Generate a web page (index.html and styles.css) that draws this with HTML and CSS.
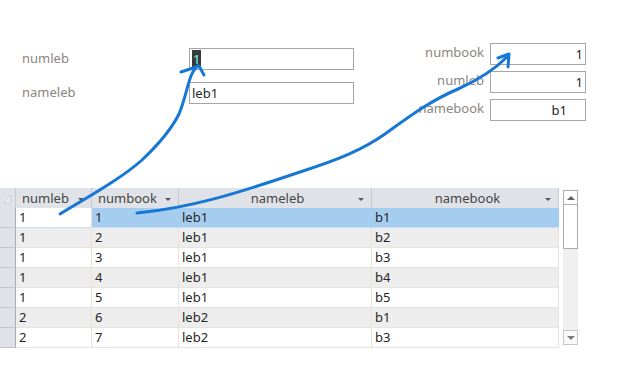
FILE: index.html
```html
<!DOCTYPE html>
<html lang="en">
<head>
    <meta charset="UTF-8">
    <meta name="viewport" content="width=device-width, initial-scale=1.0">
    <title>leb / book</title>
    <link rel="stylesheet" href="styles.css">
</head>
<body>

<div class="screen">
    <div class="forms">
        <div class="form-left">
            <label>numleb</label>
            <div class="field"><span class="sel">1</span></div>
            <label>nameleb</label>
            <div class="field">leb1</div>
        </div>
        <div class="form-right">
            <label>numbook</label>
            <div class="field num">1</div>
            <label>numleb</label>
            <div class="field num">1</div>
            <label>namebook</label>
            <div class="field num wide-pad">b1</div>
        </div>
    </div>

    <div class="datasheet">
        <div class="grid">
            <div class="row head">
                <div class="corner">
                    <svg width="14" height="19" viewBox="0 0 14 19"><path d="M3 15 L11 7 L11 15 Z" fill="#e9ebee" stroke="#cdd0d4" stroke-width="1"/></svg>
                </div>
                <div class="th"><span class="th-label">numleb</span><span class="dd"></span></div>
                <div class="th"><span class="th-label">numbook</span><span class="dd"></span></div>
                <div class="th center"><span class="th-label">nameleb</span><span class="dd"></span></div>
                <div class="th center"><span class="th-label">namebook</span><span class="dd"></span></div>
            </div>
            <div class="row selected">
                <div class="rs"></div>
                <div class="td current">1</div>
                <div class="td">1</div>
                <div class="td">leb1</div>
                <div class="td">b1</div>
            </div>
            <div class="row alt">
                <div class="rs"></div>
                <div class="td">1</div><div class="td">2</div><div class="td">leb1</div><div class="td">b2</div>
            </div>
            <div class="row">
                <div class="rs"></div>
                <div class="td">1</div><div class="td">3</div><div class="td">leb1</div><div class="td">b3</div>
            </div>
            <div class="row alt">
                <div class="rs"></div>
                <div class="td">1</div><div class="td">4</div><div class="td">leb1</div><div class="td">b4</div>
            </div>
            <div class="row">
                <div class="rs"></div>
                <div class="td">1</div><div class="td">5</div><div class="td">leb1</div><div class="td">b5</div>
            </div>
            <div class="row alt">
                <div class="rs"></div>
                <div class="td">2</div><div class="td">6</div><div class="td">leb2</div><div class="td">b1</div>
            </div>
            <div class="row">
                <div class="rs"></div>
                <div class="td">2</div><div class="td">7</div><div class="td">leb2</div><div class="td">b3</div>
            </div>
        </div>

        <div class="vscroll">
            <div class="sb-btn"><span class="tri-up"></span></div>
            <div class="sb-thumb"></div>
            <div class="sb-track"></div>
            <div class="sb-btn bottom"><span class="tri-down"></span></div>
        </div>
    </div>

    <!-- hand drawn arrows on top of the screenshot -->
    <svg class="ink" width="633" height="372" viewBox="0 0 633 372">
        <path d="M60 214 C88 197 122 178 142 160 C160 143 172 128 179 114 C185 100 187 86 191 76 C193 71 195 68 198 66"/>
        <path d="M181 72 L199 66 L204 75"/>
        <path d="M137 213 C190 208 235 194 300 172 C340 159 362 150 385 134 C410 116 430 101 458 89 C478 80 494 70 507 57"/>
        <path d="M498 58 L509 54 L508 67"/>
    </svg>
</div>

</body>
</html>
```

FILE: styles.css
```css
body {
    margin: 0;
    padding: 0;
    background-color: #fff;
    font-family: "Noto Sans", "Open Sans", sans-serif;
    font-size: 13px;
    color: #262626;
}
.screen {
    position: relative;
    width: 633px;
    height: 372px;
    overflow: hidden;
}
.forms {
    display: flex;
    align-items: flex-start;
    height: 188px;
}
label {
    color: #8b8580;
    white-space: nowrap;
    align-self: center;
}
.field {
    box-sizing: border-box;
    height: 22px;
    border: 1px solid #a6a6a6;
    padding: 0 2px;
    line-height: 20px;
    background-color: #fff;
    white-space: nowrap;
}
.form-left {
    display: grid;
    grid-template-columns: 167px 165px;
    row-gap: 12px;
    margin: 48px 0 0 22px;
}
.form-left label {
    margin-top: -3px;
}
.sel {
    display: inline-block;
    background-color: #3a3a3a;
    color: #6ff;
    padding: 0 1px;
    line-height: 18px;
    margin-top: 1px;
}
.form-right {
    display: grid;
    grid-template-columns: 66px 96px;
    column-gap: 6px;
    row-gap: 6px;
    margin: 43px 0 0 64px;
}
.form-right label {
    text-align: right;
    margin-top: -4px;
}
.field.num {
    text-align: right;
    padding-right: 2px;
}
.field.wide-pad {
    padding-right: 18px;
}

/* datasheet */
.datasheet {
    display: flex;
    align-items: flex-start;
}
.grid {
    width: 559px;
}
.row {
    display: grid;
    grid-template-columns: 16px 76px 87px 193px 187px;
    height: 20px;
}
.row > div {
    box-sizing: border-box;
    height: 20px;
    line-height: 19px;
    white-space: nowrap;
    overflow: hidden;
}
.head > div {
    background-color: #dfe2e6;
    color: #454545;
    border-right: 1px solid #c6c9cd;
}
.corner {
    border-right: 1px solid #c6c9cd;
}
.corner svg {
    display: block;
}
.th {
    display: flex;
    align-items: center;
    padding: 0 7px 0 6px;
}
.th-label {
    flex: 1;
}
.th.center .th-label {
    text-align: center;
    padding-left: 12px;
}
.dd {
    width: 0;
    height: 0;
    border-left: 3px solid transparent;
    border-right: 3px solid transparent;
    border-top: 3px solid #555;
    margin-top: 2px;
}
.rs {
    background-color: #dfe2e6;
    border-right: 1px solid #a9adb3;
    border-bottom: 1px solid #c2c6cb;
}
.td {
    padding-left: 3px;
    border-right: 1px solid #e6e4de;
    border-bottom: 1px solid #e6e4de;
}
.row.alt .td {
    background-color: #ededed;
}
.row.selected .td {
    background-color: #a5cdf0;
    border-right-color: #a5cdf0;
    border-bottom-color: #c9def0;
}
.row.selected .td.current {
    background-color: #fff;
    border-right-color: #e6e4de;
}

/* scrollbar */
.vscroll {
    display: flex;
    flex-direction: column;
    width: 15px;
    height: 155px;
    margin: 2px 0 0 4px;
    background-color: #f0f0f0;
}
.sb-btn {
    box-sizing: border-box;
    height: 15px;
    border: 1px solid #acacac;
    background-color: #fff;
    display: flex;
    align-items: center;
    justify-content: center;
}
.sb-btn.bottom {
    border-color: #c6c6c6;
    background-color: #fafafa;
}
.tri-up {
    width: 0;
    height: 0;
    border-left: 4px solid transparent;
    border-right: 4px solid transparent;
    border-bottom: 4px solid #606060;
}
.tri-down {
    width: 0;
    height: 0;
    border-left: 4px solid transparent;
    border-right: 4px solid transparent;
    border-top: 4px solid #7a7a7a;
}
.sb-thumb {
    box-sizing: border-box;
    height: 44px;
    border: 1px solid #acacac;
    border-top: none;
    background-color: #fff;
}
.sb-track {
    flex: 1;
}

.ink {
    position: absolute;
    top: 0;
    left: 0;
    pointer-events: none;
}
.ink path {
    fill: none;
    stroke: #1777d5;
    stroke-width: 3;
    stroke-linecap: round;
    stroke-linejoin: round;
}
```
